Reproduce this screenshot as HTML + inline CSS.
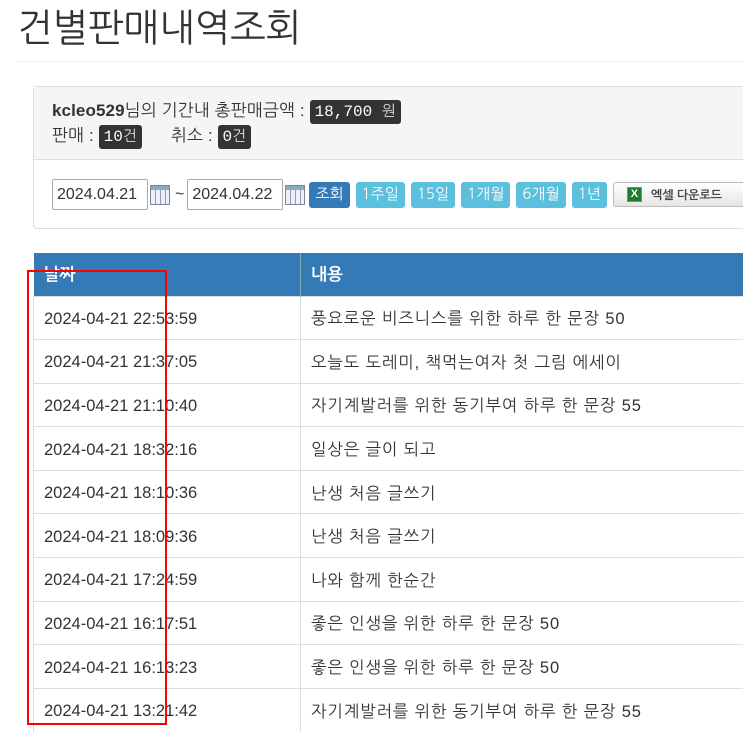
<!DOCTYPE html>
<html><head><meta charset="utf-8"><style>
*{box-sizing:border-box;margin:0;padding:0}
body{width:743px;height:742px;overflow:hidden;background:#fff;font-family:"Liberation Sans","NanumGothic",sans-serif;color:#333;position:relative}
.title{position:absolute;left:17px;top:4px;font-size:38px;font-weight:normal;color:#333;font-family:"NanumGothic",sans-serif;white-space:nowrap;letter-spacing:-0.2px}
.hr{position:absolute;left:17px;top:61px;width:726px;height:1px;background:#eee}
.panel{position:absolute;left:33px;top:86px;width:730px;height:143px;border:1px solid #ddd;border-radius:4px;background:#fff}
.ph{height:73px;background:#f5f5f5;border-bottom:1px solid #ddd;padding:12px 18px;font-size:17px;line-height:23px;letter-spacing:0.1px;white-space:nowrap}
.lbl{display:inline-block;background:#333;color:#fff;border-radius:3px;padding:0 5px;font-family:"Liberation Mono","NanumGothic",monospace;font-size:16px;line-height:23px;letter-spacing:0}
.lbl small{font-size:15px;font-family:"NanumGothic",sans-serif;color:#ddd}
.row{position:absolute;top:92px;left:18px;display:flex;align-items:center;font-size:16px;white-space:nowrap}
.row>*{flex-shrink:0}
.inp{width:96px;height:31px;border:1px solid #aaa;padding:0 4px;line-height:29px;font-size:16px;border-radius:2px}
.cal{width:20px;height:20px;margin:0 2px;border:1px solid #789;background:repeating-linear-gradient(90deg,#eef 0 4px,#99a 4px 5px),#eef;box-shadow:inset 0 4px 0 #8ab}
.btn{height:26px;line-height:26px;padding:0 6px;border-radius:3px;color:#fff;font-size:15px;margin-right:6px;background:#5bc0de;font-family:"NanumGothic",sans-serif}
.xl{height:25px;border:1px solid #bbb;border-radius:3px;background:linear-gradient(#fff,#e6e6e6);width:140px;font-size:12px;font-weight:bold;color:#444;display:flex;align-items:center;padding-left:13px;font-family:"NanumGothic",sans-serif}
.xi{width:15px;height:15px;background:#1e7b30;border:1px solid #5a5;color:#fff;font-size:11px;line-height:13px;text-align:center;margin-right:9px;font-family:"Liberation Sans";}
table{position:absolute;left:33px;top:253px;border-collapse:collapse;width:740px;font-size:16.5px;white-space:nowrap}
th{background:#337ab7;color:#fff;height:43px;text-align:left;padding-left:10px;font-weight:bold;border-right:1px solid #8ab;font-family:"NanumGothic",sans-serif;font-size:17px}
td{height:43.6px;border-top:1px solid #ddd;border-left:1px solid #ddd;padding-left:10px;padding-top:3px;color:#333}
td+td{letter-spacing:0.85px}
.red{position:absolute;left:27px;top:270px;width:140px;height:455px;border:2px solid #f00}
</style></head><body>
<div class="title">건별판매내역조회</div>
<div class="hr"></div>
<div class="panel">
<div class="ph"><b>kcleo529</b>님의 기간내 총판매금액 : <span class="lbl">18,700 <small>원</small></span><br>판매 : <span class="lbl">10<small>건</small></span>&nbsp;&nbsp;&nbsp;&nbsp;&nbsp; 취소 : <span class="lbl">0<small>건</small></span></div>
<div class="row"><div class="inp">2024.04.21</div><div class="cal"></div><span style="margin:0 3px">~</span><div class="inp">2024.04.22</div><div class="cal"></div>
<div class="btn" style="background:#337ab7;margin-left:2px">조회</div><div class="btn">1주일</div><div class="btn">15일</div><div class="btn">1개월</div><div class="btn">6개월</div><div class="btn">1년</div><div class="xl"><div class="xi">X</div>엑셀 다운로드</div></div>
</div>
<table>
<tr><th style="width:267px">날짜</th><th>내용</th></tr>
<tr><td>2024-04-21 22:53:59</td><td>풍요로운 비즈니스를 위한 하루 한 문장 50</td></tr>
<tr><td>2024-04-21 21:37:05</td><td>오늘도 도레미, 책먹는여자 첫 그림 에세이</td></tr>
<tr><td>2024-04-21 21:10:40</td><td>자기계발러를 위한 동기부여 하루 한 문장 55</td></tr>
<tr><td>2024-04-21 18:32:16</td><td>일상은 글이 되고</td></tr>
<tr><td>2024-04-21 18:10:36</td><td>난생 처음 글쓰기</td></tr>
<tr><td>2024-04-21 18:09:36</td><td>난생 처음 글쓰기</td></tr>
<tr><td>2024-04-21 17:24:59</td><td>나와 함께 한순간</td></tr>
<tr><td>2024-04-21 16:17:51</td><td>좋은 인생을 위한 하루 한 문장 50</td></tr>
<tr><td>2024-04-21 16:13:23</td><td>좋은 인생을 위한 하루 한 문장 50</td></tr>
<tr><td>2024-04-21 13:21:42</td><td>자기계발러를 위한 동기부여 하루 한 문장 55</td></tr>
</table>
<div class="red"></div>
</body></html>
